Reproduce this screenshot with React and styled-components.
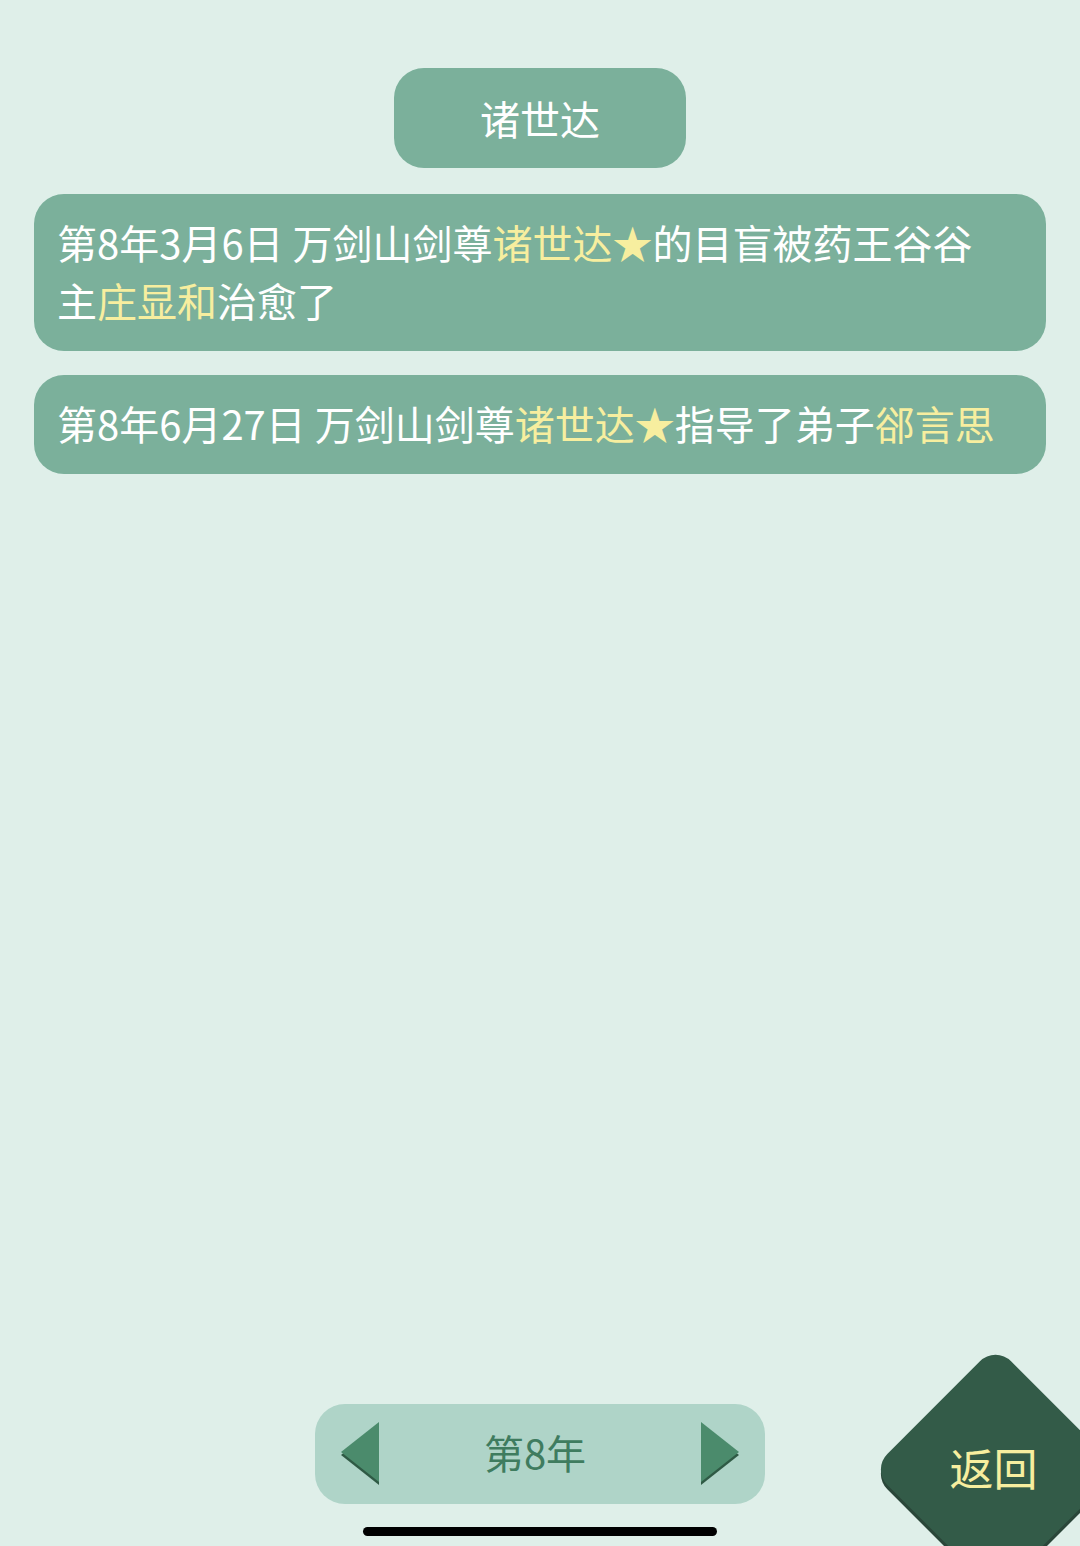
import styled, { createGlobalStyle } from "styled-components";

const GlobalStyle = createGlobalStyle`
  html, body {
    margin: 0;
    padding: 0;
    background: #dfefe9;
  }
  body {
    font-family: "Noto Sans CJK SC", "Noto Sans", sans-serif;
  }
`;

const Page = styled.div`
  position: relative;
  width: 1080px;
  height: 1546px;
  overflow: hidden;
  background: #dfefe9;
  display: flex;
  flex-direction: column;
  align-items: center;
  padding-top: 68px;
  box-sizing: border-box;
`;

const TitlePill = styled.div`
  width: 292px;
  height: 100px;
  border-radius: 30px;
  background: #7bb09b;
  color: #ffffff;
  font-size: 40px;
  display: flex;
  align-items: center;
  justify-content: center;
`;

const List = styled.div`
  align-self: stretch;
  margin: 26px 34px 0;
  display: flex;
  flex-direction: column;
  gap: 24px;
`;

const Card = styled.div`
  background: #7bb09b;
  border-radius: 30px;
  padding: 19px 42px 22px 23px;
  color: #ffffff;
  font-size: 40px;
  line-height: 58px;
`;

const Name = styled.span`
  color: #f7ee9f;
`;

const Spacer = styled.div`
  flex: 1;
`;

const YearBar = styled.div`
  width: 450px;
  height: 100px;
  border-radius: 30px;
  background: #afd4c8;
  display: flex;
  align-items: center;
  justify-content: space-between;
  padding: 0 24px;
  box-sizing: border-box;
`;

const YearText = styled.div`
  color: #3f7c5f;
  font-size: 40px;
  margin: -4px 10px 0 0;
`;

const Arrow = styled.svg`
  width: 42px;
  height: 66px;
  display: block;
`;

const HomeIndicator = styled.div`
  width: 354px;
  height: 9px;
  border-radius: 5px;
  background: #000000;
  margin: 23px 0 10px;
`;

const BackButton = styled.div`
  position: absolute;
  left: 908px;
  top: 1382px;
  width: 175px;
  height: 175px;
  display: flex;
  align-items: center;
  justify-content: center;
`;

const Diamond = styled.div`
  position: absolute;
  inset: 0;
  background: #335b48;
  border-radius: 22px;
  transform: rotate(45deg);
  box-shadow: 3px 3px 0 #2a4639;
`;

const BackText = styled.span`
  position: relative;
  color: #f7ee9f;
  font-size: 44px;
  margin: -6px 0 0 -4px;
`;

const LeftArrow = () => (
  <Arrow viewBox="0 0 42 66">
    <polygon points="40,4 40,64 2,34" fill="#2f5a45" />
    <polygon points="40,1 40,61 2,31" fill="#4b8b6c" />
  </Arrow>
);

const RightArrow = () => (
  <Arrow viewBox="0 0 42 66">
    <polygon points="2,4 2,64 40,34" fill="#2f5a45" />
    <polygon points="2,1 2,61 40,31" fill="#4b8b6c" />
  </Arrow>
);

const App = () => {
  return (
    <>
      <GlobalStyle />
      <Page>
        <TitlePill>诸世达</TitlePill>
        <List>
          <Card>
            第8年3月6日 万剑山剑尊<Name>诸世达★</Name>的目盲被药王谷谷主
            <Name>庄显和</Name>治愈了
          </Card>
          <Card>
            第8年6月27日 万剑山剑尊<Name>诸世达★</Name>指导了弟子
            <Name>郤言思</Name>
          </Card>
        </List>
        <Spacer />
        <YearBar>
          <LeftArrow />
          <YearText>第8年</YearText>
          <RightArrow />
        </YearBar>
        <HomeIndicator />
        <BackButton>
          <Diamond />
          <BackText>返回</BackText>
        </BackButton>
      </Page>
    </>
  );
};

export default App;
